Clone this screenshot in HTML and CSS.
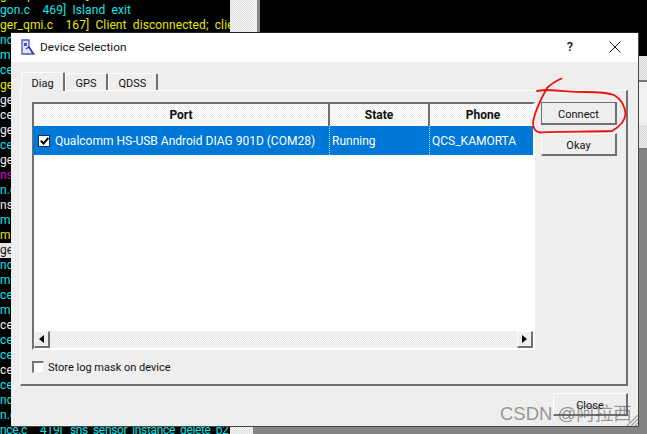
FILE: index.html
```html
<!DOCTYPE html>
<html lang="en">
<head>
<meta charset="utf-8">
<title>Device Selection</title>
<link rel="stylesheet" href="styles.css">
</head>
<body>
<div class="desktop">
  <div class="term">
    <div class="line first yellow">ger_qmi.c&nbsp;&nbsp;&nbsp;&nbsp;167]&nbsp;&nbsp;Client</div>
    <div class="line cyan">gon.c&nbsp;&nbsp;&nbsp;&nbsp;469]&nbsp;&nbsp;Island&nbsp;&nbsp;exit</div>
    <div class="line yellow">ger_qmi.c&nbsp;&nbsp;&nbsp;&nbsp;167]&nbsp;&nbsp;Client&nbsp;&nbsp;disconnected;&nbsp;&nbsp;clie</div>
    <div class="line cyan">nc</div>
    <div class="line cyan">m</div>
    <div class="line cyan">ce</div>
    <div class="line yellow">ge</div>
    <div class="line white">ge</div>
    <div class="line white">ce</div>
    <div class="line white">ge</div>
    <div class="line cyan">ce</div>
    <div class="line white">ge</div>
    <div class="line magenta">ns</div>
    <div class="line cyan">n.c</div>
    <div class="line white">ns</div>
    <div class="line cyan">m</div>
    <div class="line yellow">m</div>
    <div class="line picked">ge</div>
    <div class="line cyan">nc</div>
    <div class="line cyan">m</div>
    <div class="line cyan">ce</div>
    <div class="line cyan">m</div>
    <div class="line white">ce</div>
    <div class="line cyan">ce</div>
    <div class="line cyan">ce</div>
    <div class="line white">ce</div>
    <div class="line cyan">ce</div>
    <div class="line cyan">nc</div>
    <div class="line cyan">n.c</div>
    <div class="line cyan tight">nce.c&nbsp;&nbsp;&nbsp;&nbsp;&nbsp;419]&nbsp;&nbsp;&nbsp;sns_sensor_instance_delete_b2</div>
  </div>
  <div class="term-scroll"></div>
  <div class="term-edge"></div>

  <div class="back-window">
    <div class="strip-dither short"></div>
    <div class="strip-line"></div>
    <div class="strip-light"></div>
    <div class="strip-dither"></div>
    <div class="strip-line"></div>
    <div class="strip-gray"></div>
  </div>

  <div class="dialog">
    <header class="titlebar">
      <svg class="app-icon" width="16" height="16" viewBox="0 0 16 16">
        <path d="M2 1h7v7l5 7H2z" fill="#dfe2f8" stroke="#4a55c8" stroke-width="1.3"/>
        <path d="M4 4h3v3H4z" fill="#4a55c8"/>
        <path d="M6 10l3-2 4 7" fill="none" stroke="#2c3a96" stroke-width="1.4"/>
      </svg>
      <span class="title">Device Selection</span>
      <span class="help">?</span>
      <svg class="close-x" width="12" height="12" viewBox="0 0 12 12">
        <path d="M.5.5l11 11M11.5.5l-11 11" stroke="#111" stroke-width="1" fill="none"/>
      </svg>
    </header>

    <div class="body">
      <nav class="tabs">
        <div class="tab active">Diag</div>
        <div class="tab">GPS</div>
        <div class="tab">QDSS</div>
      </nav>

      <section class="pane">
        <div class="left">
          <div class="table">
            <div class="thead">
              <div class="th col-port">Port</div>
              <div class="th col-state">State</div>
              <div class="th col-phone">Phone</div>
            </div>
            <div class="row">
              <div class="td col-port">
                <span class="check checked">
                  <svg width="9" height="8" viewBox="0 0 9 8"><path d="M.8 3.6l2.7 2.8L8.4.8" fill="none" stroke="#000" stroke-width="2"/></svg>
                </span>
                <span class="cell-text">Qualcomm HS-USB Android DIAG 901D (COM28)</span>
              </div>
              <div class="td col-state">Running</div>
              <div class="td col-phone">QCS_KAMORTA</div>
            </div>
            <div class="table-space"></div>
            <div class="hscroll">
              <div class="arrow-btn"><span class="tri left-tri"></span></div>
              <div class="track"></div>
              <div class="arrow-btn"><span class="tri right-tri"></span></div>
            </div>
          </div>
          <label class="store">
            <span class="check"></span>
            <span class="store-label">Store log mask on device</span>
          </label>
        </div>
        <div class="side">
          <div class="btn default">Connect</div>
          <div class="btn">Okay</div>
        </div>
      </section>

      <footer class="footer">
        <div class="btn close">Close</div>
      </footer>
    </div>
    <svg class="grip" width="12" height="12" viewBox="0 0 12 12">
      <path d="M12 1L1 12M12 5l-7 7M12 9l-3 3" stroke="#9a9a9a" stroke-width="1.2" fill="none"/>
    </svg>
  </div>

  <svg class="scribble" width="647" height="434" viewBox="0 0 647 434">
    <path d="M561.5 78.5C556 81 551 84 547 88C542 97 535 110 533 122C533 128 535 132 540 132.500C560 131 590 132 612 131C619 127 625 122 625.500 114C625 105 621 99 614 95C606 92 596 92 586 92C570 92 555 90 545 90L537 91" fill="none" stroke="#f01010" stroke-width="1.8" stroke-linecap="round" stroke-linejoin="round"/>
  </svg>

  <div class="watermark">CSDN @阿拉西</div>
</div>
</body>
</html>
```
FILE: styles.css
```css
* { box-sizing: border-box; }
html, body { margin: 0; padding: 0; background: #000; }
body { width: 647px; height: 434px; overflow: hidden; }

.desktop {
  position: relative;
  display: flex;
  width: 647px;
  height: 434px;
  overflow: hidden;
  background: #000;
}

.term {
  width: 230px;
  height: 434px;
  overflow: hidden;
  font: 12px/15px "Roboto", sans-serif;
  letter-spacing: 0.1px;
  padding-top: 1px;
}
.line { height: 15px; white-space: nowrap; overflow: hidden; }
.line.first { margin-top: -13px; }
.line.tight { letter-spacing: -0.35px; }
.cyan { color: #0ee6e6; }
.yellow { color: #e8e800; }
.white { color: #f0f0f0; }
.magenta { color: #e000c8; }
.picked { color: #111; background: #e4e4e4; }

.term-scroll {
  width: 23px;
  height: 434px;
  background: repeating-conic-gradient(#f6f6f6 0 25%, #dedede 0 50%) 0 0 / 2px 2px;
}
.term-edge {
  width: 7px;
  height: 434px;
  background: linear-gradient(90deg, #f0f0f0 0 4px, #8a8a8a 4px 100%);
}

.back-window {
  position: absolute;
  left: 253px;
  right: 0;
  top: 56px;
  bottom: 0;
  display: flex;
  flex-direction: column;
}
.strip-dither {
  height: 23px;
  background: repeating-conic-gradient(#f0f0f0 0 25%, #d4d4d4 0 50%) 0 0 / 2px 2px;
}
.strip-dither.short { height: 24px; }
.strip-line { height: 2px; background: #777; }
.strip-light { height: 43px; background: #f0f0f0; }
.strip-gray { flex: 1; background: #858585; }

.dialog {
  position: absolute;
  left: 11px;
  top: 32px;
  width: 628px;
  height: 395px;
  display: flex;
  flex-direction: column;
  background: #eeeeee;
  border-right: 1px solid #444;
  border-bottom: 1px solid #444;
  border-top: 1px solid #222;
  font: 11px/16px "Roboto", sans-serif;
  color: #111;
}

.titlebar {
  flex: none;
  height: 29px;
  display: flex;
  align-items: center;
  background: #fff;
  padding: 0 17px 2px 9px;
}
.app-icon { margin-right: 4px; }
.title { flex: 1; font-size: 11.800px; }
.help { font-size: 13px; font-weight: 500; margin-right: 36px; }

.body {
  flex: 1;
  display: flex;
  flex-direction: column;
  padding: 9px 10px 0 9px;
  min-height: 0;
}

.tabs { display: flex; height: 19px; align-items: flex-end; padding-left: 1px; position: relative; z-index: 1; }
.tab {
  height: 17px;
  padding: 0 9.500px;
  line-height: 19px;
  border-top: 1px solid #fff;
  border-left: 1px solid #fff;
  border-right: 2px solid #707070;
  border-radius: 2px 2px 0 0;
  background: #eeeeee;
}
.tab.active {
  height: 19px;
  line-height: 21px;
  margin-bottom: -1px;
}

.pane {
  width: 608px;
  height: 296px;
  display: flex;
  padding: 11px 0 0 11px;
  border-top: 1px solid #fff;
  border-left: 1px solid #fff;
  border-right: 2px solid #707070;
  border-bottom: 2px solid #707070;
}
.left { width: 503px; display: flex; flex-direction: column; }

.table {
  height: 248px;
  display: flex;
  flex-direction: column;
  border-top: 2px solid #707070;
  border-left: 2px solid #707070;
  border-right: 2px solid #fff;
  border-bottom: 2px solid #fff;
  background: #fff;
}
.thead { display: flex; height: 22px; flex: none; }
.th {
  font-weight: 700;
  font-size: 12px;
  line-height: 23px;
  text-align: center;
  background: repeating-conic-gradient(#ffffff 0 25%, #eeeeee 0 50%) 0 0 / 2px 2px;
  border-right: 2px solid #707070;
}
.col-port { width: 296px; }
.col-state { width: 100px; }
.col-phone { width: 103px; padding-left: 3px; }
.th.col-phone { border-right: 0; }

.row {
  flex: none;
  display: flex;
  height: 29px;
  margin: 0 0 0 -1px;
  background: #0078d7;
  color: #fff;
}
.td {
  display: flex;
  align-items: center;
  padding: 0 2px;
  font-size: 12px;
  border-right: 1px dotted #cfe4f7;
  white-space: nowrap;
  overflow: hidden;
}
.td.col-port { width: 297px; padding-left: 5px; }
.td.col-phone { border-right: 0; padding-right: 0; }
.cell-text { margin-left: 5px; }
.check {
  flex: none;
  width: 12px;
  height: 12px;
  display: flex;
  align-items: center;
  justify-content: center;
  border-top: 2px solid #777;
  border-left: 2px solid #777;
  border-right: 1px solid #eee;
  border-bottom: 1px solid #eee;
  background: #fff;
}
.check.checked { border: 1px solid #0f2d4d; }

.table-space { flex: 1; }
.hscroll { flex: none; display: flex; height: 17px; background: repeating-conic-gradient(#f8f8f8 0 25%, #e6e6e6 0 50%) 0 0 / 2px 2px; }
.track { flex: 1; }
.arrow-btn {
  width: 16px;
  display: flex;
  align-items: center;
  justify-content: center;
  background: #eeeeee;
  border-top: 1px solid #fff;
  border-left: 1px solid #fff;
  border-right: 2px solid #707070;
  border-bottom: 2px solid #707070;
}
.tri { width: 0; height: 0; border-top: 4px solid transparent; border-bottom: 4px solid transparent; }
.left-tri { border-right: 5px solid #000; }
.right-tri { border-left: 5px solid #000; }

.store { display: flex; align-items: center; gap: 4px; margin-top: 10px; height: 13px; }
.store-label { line-height: 17px; height: 15px; }

.side { display: flex; flex-direction: column; gap: 8px; margin-left: 6px; width: 76px; }
.btn {
  height: 23px;
  line-height: 23px;
  text-align: center;
  border-top: 1px solid #fff;
  border-left: 1px solid #fff;
  border-right: 2px solid #707070;
  border-bottom: 2px solid #707070;
  background: #eeeeee;
}
.btn.default { border: 1px solid #707070; border-right-width: 2px; border-bottom-width: 2px; }

.footer { display: flex; justify-content: flex-end; padding-top: 7px; }
.btn.close { width: 75px; }

.grip { position: absolute; right: 0; bottom: 0; }

.scribble { position: absolute; left: 0; top: 0; pointer-events: none; }

.watermark {
  position: absolute;
  left: 500px;
  top: 402px;
  font: 18.500px/24px "Liberation Sans", "Noto Sans CJK SC", sans-serif;
  color: rgba(90, 90, 90, 0.62);
  white-space: nowrap;
}
```
